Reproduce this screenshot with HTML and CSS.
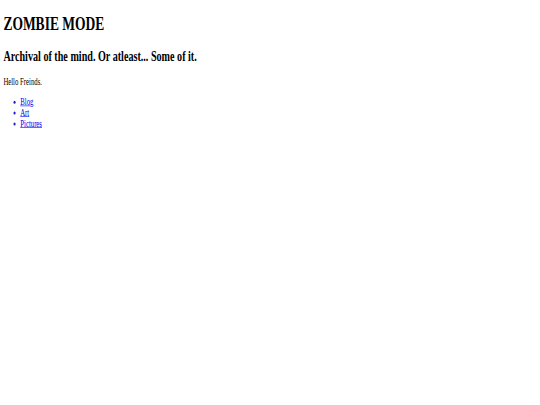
FILE: index.html
```html
<!DOCTYPE html>
<html>
<head>
<meta charset="utf-8">
<title>Zombie Mode</title>
<link rel="stylesheet" href="styles.css">
</head>
<body>
<div class="page">
  <h1 class="title">ZOMBIE MODE</h1>
  <h2 class="subtitle">Archival of the mind. Or atleast... Some of it.</h2>
  <p class="greeting">Hello Freinds.</p>
  <ul class="nav">
    <li class="nav-item"><a class="nav-link" href="#">Blog</a></li>
    <li class="nav-item"><a class="nav-link" href="#">Art</a></li>
    <li class="nav-item"><a class="nav-link" href="#">Pictures</a></li>
  </ul>
</div>
</body>
</html>
```
FILE: styles.css
```css
html, body {
  margin: 0;
  background: #ffffff;
}

.page {
  display: flow-root;
  padding: 0 8px;
  font-family: "Liberation Serif", "Times New Roman", serif;
  font-size: 16px;
  color: #000000;
  transform: scale(0.421875, 0.6);
  transform-origin: 0 0;
}

.title {
  font-size: 32px;
  font-weight: bold;
  margin: 21.44px 0;
}

.subtitle {
  font-size: 24px;
  font-weight: bold;
  margin: 19.92px 0;
  white-space: nowrap;
}

.greeting {
  margin: 16px 0;
}

.nav {
  margin: 16px 0;
  padding-left: 40px;
}

.nav-item::marker {
  color: #1a1acc;
}

.nav-link {
  color: #0000ee;
}
```
